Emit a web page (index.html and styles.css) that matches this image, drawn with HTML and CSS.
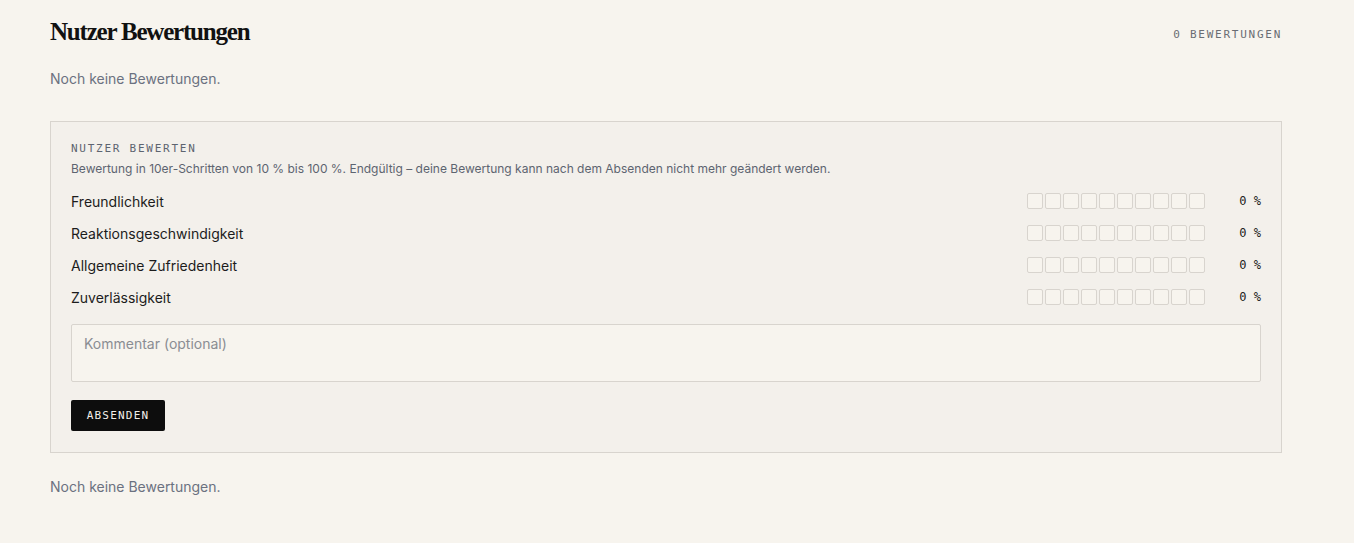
FILE: index.html
```html
<!DOCTYPE html>
<html lang="de">
<head>
<meta charset="utf-8">
<title>Nutzer Bewertungen</title>
<link rel="stylesheet" href="styles.css">
</head>
<body>
<main class="page">
  <header class="head">
    <h1 class="title">Nutzer Bewertungen</h1>
    <span class="count">0 Bewertungen</span>
  </header>
  <p class="empty">Noch keine Bewertungen.</p>

  <section class="card">
    <div class="label">Nutzer bewerten</div>
    <p class="hint">Bewertung in 10er-Schritten von 10 % bis 100 %. Endgültig – deine Bewertung kann nach dem Absenden nicht mehr geändert werden.</p>

    <div class="rows">
      <div class="row">
        <span class="name">Freundlichkeit</span>
        <div class="scale"><i></i><i></i><i></i><i></i><i></i><i></i><i></i><i></i><i></i><i></i></div>
        <span class="pct">0 %</span>
      </div>
      <div class="row">
        <span class="name">Reaktionsgeschwindigkeit</span>
        <div class="scale"><i></i><i></i><i></i><i></i><i></i><i></i><i></i><i></i><i></i><i></i></div>
        <span class="pct">0 %</span>
      </div>
      <div class="row">
        <span class="name">Allgemeine Zufriedenheit</span>
        <div class="scale"><i></i><i></i><i></i><i></i><i></i><i></i><i></i><i></i><i></i><i></i></div>
        <span class="pct">0 %</span>
      </div>
      <div class="row">
        <span class="name">Zuverlässigkeit</span>
        <div class="scale"><i></i><i></i><i></i><i></i><i></i><i></i><i></i><i></i><i></i><i></i></div>
        <span class="pct">0 %</span>
      </div>
    </div>

    <textarea class="comment" placeholder="Kommentar (optional)"></textarea>
    <button class="submit" type="button">Absenden</button>
  </section>

  <p class="empty bottom">Noch keine Bewertungen.</p>
</main>
</body>
</html>
```

FILE: styles.css
```css
* { box-sizing: border-box; }
html, body { margin: 0; padding: 0; }
body {
  background: #f7f4ee;
  font-family: Inter, "Noto Sans", sans-serif;
  color: #1c1c1c;
}
.page {
  width: 1232px;
  margin-left: 50px;
  padding-top: 17px;
}
.head {
  display: flex;
  justify-content: space-between;
  align-items: center;
  height: 30px;
}
.title {
  margin: 0;
  font-family: "Liberation Serif", "DejaVu Serif", serif;
  font-weight: 700;
  font-size: 25px;
  letter-spacing: -1.2px;
  color: #111;
  line-height: 30px;
}
.count {
  font-family: "DejaVu Sans Mono", monospace;
  font-size: 11px;
  letter-spacing: 1.75px;
  text-transform: uppercase;
  color: #6a6d73;
  margin-right: 0;
  padding-top: 4px;
}
.empty {
  margin: 23px 0 0;
  font-size: 14px;
  line-height: 18px;
  color: #6b7180;
}
.card {
  margin-top: 33px;
  border: 1px solid #d8d4ce;
  background: #f3f0eb;
  padding: 20px 20px 21px;
  display: flex;
  flex-direction: column;
}
.label {
  font-family: "DejaVu Sans Mono", monospace;
  font-size: 11px;
  letter-spacing: 1.75px;
  text-transform: uppercase;
  color: #5d6470;
  line-height: 14px;
}
.hint {
  margin: 5px 0 0;
  font-size: 12px;
  line-height: 16px;
  color: #5d6470;
}
.rows {
  margin-top: 8px;
  display: flex;
  flex-direction: column;
}
.row {
  display: flex;
  align-items: center;
  height: 32px;
}
.name {
  flex: 1;
  font-size: 14px;
  color: #1c1c1c;
}
.scale {
  display: flex;
  gap: 2px;
}
.scale i {
  display: block;
  width: 16px;
  height: 16px;
  border: 1px solid #d8d4ce;
  border-radius: 2px;
  background: #f7f4ee;
}
.pct {
  width: 56px;
  text-align: right;
  font-family: "DejaVu Sans Mono", monospace;
  font-size: 12px;
  color: #1c1c1c;
}
.comment {
  margin-top: 11px;
  height: 58px;
  width: 100%;
  resize: none;
  border: 1px solid #d8d4ce;
  border-radius: 2px;
  background: #f7f4ee;
  padding: 10px 12px;
  font-family: Inter, "Noto Sans", sans-serif;
  font-size: 14px;
  color: #1c1c1c;
  outline: none;
}
.comment::placeholder { color: #8a8d93; }
.submit {
  margin-top: 18px;
  align-self: flex-start;
  width: 94px;
  height: 31px;
  border: 0;
  border-radius: 2px;
  background: #0d0d0d;
  color: #f2efe9;
  font-family: "DejaVu Sans Mono", monospace;
  font-size: 11px;
  letter-spacing: 1.2px;
  text-transform: uppercase;
  padding: 0;
}
.empty.bottom {
  margin-top: 25px;
}
```
